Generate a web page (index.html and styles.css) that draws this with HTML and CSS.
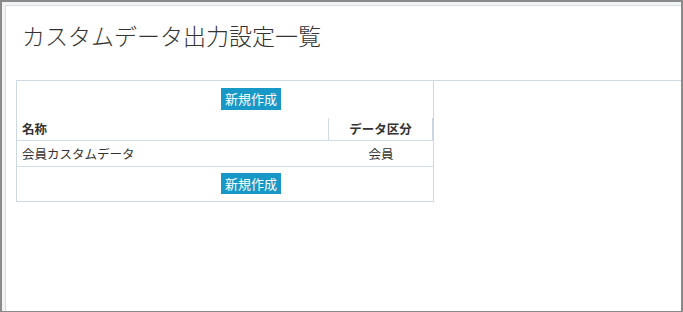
FILE: index.html
```html
<!DOCTYPE html>
<html lang="ja">
<head>
    <meta charset="UTF-8">
    <meta name="viewport" content="width=device-width, initial-scale=1.0">
    <title>カスタムデータ出力設定一覧</title>
    <link rel="stylesheet" href="styles.css">
</head>
<body>
    <div class="frame">
        <div class="panel">
            <h1 class="title">カスタムデータ出力設定一覧</h1>

            <div class="section">
                <div class="list">
                    <div class="btn-row">
                        <button class="btn">新規作成</button>
                    </div>
                    <div class="grid head">
                        <div class="cell name">名称</div>
                        <div class="cell kind">データ区分</div>
                    </div>
                    <div class="grid row">
                        <div class="cell name">会員カスタムデータ</div>
                        <div class="cell kind">会員</div>
                    </div>
                    <div class="btn-row last">
                        <button class="btn">新規作成</button>
                    </div>
                </div>
            </div>
        </div>
    </div>
</body>
</html>
```

FILE: styles.css
```css
html, body {
    margin: 0;
    padding: 0;
}

body {
    font-family: "Noto Sans CJK JP", "Noto Sans", sans-serif;
    color: #333;
    background: #fff;
}

.frame {
    box-sizing: border-box;
    width: 683px;
    height: 312px;
    border: 2px solid #8a8a8a;
    border-bottom-width: 1px;
    background: #f2f3f4;
    padding: 3px 0 0 3px;
}

.panel {
    box-sizing: border-box;
    height: 100%;
    background: #fff;
    border-top: 1px solid #d6dce2;
    border-left: 1px solid #d6dee6;
    padding-left: 10px;
}

.title {
    margin: 14px 0 30px 6px;
    font-size: 23px;
    line-height: 30px;
    font-weight: 300;
    color: #333;
}

.section {
    border-top: 1px solid #cfd9e1;
}

.list {
    box-sizing: border-box;
    width: 418px;
    border: 1px solid #cbd8e2;
    border-top: none;
}

.btn-row {
    display: flex;
    padding: 7px 0 8px 204px;
}

.btn-row.last {
    padding: 6px 0 7px 204px;
}

.btn {
    font-family: inherit;
    font-size: 13px;
    line-height: 22px;
    height: 22px;
    width: 60px;
    padding: 0;
    border: none;
    background-color: #1898c6;
    color: #fff;
    cursor: pointer;
}

.last .btn {
    height: 21px;
    line-height: 21px;
}

.grid {
    display: grid;
    grid-template-columns: 312px 1fr;
    border-bottom: 1px solid #d3dde5;
}

.cell {
    font-size: 12.5px;
    padding: 0 5px;
}

.head .cell {
    height: 22px;
    line-height: 22px;
    font-weight: 600;
}

.head .name {
    border-right: 1px solid #d0dae2;
}

.head .kind {
    border-right: 1px solid #c8d4de;
}

.row .cell {
    height: 25px;
    line-height: 25px;
}

.kind {
    text-align: center;
}
```
